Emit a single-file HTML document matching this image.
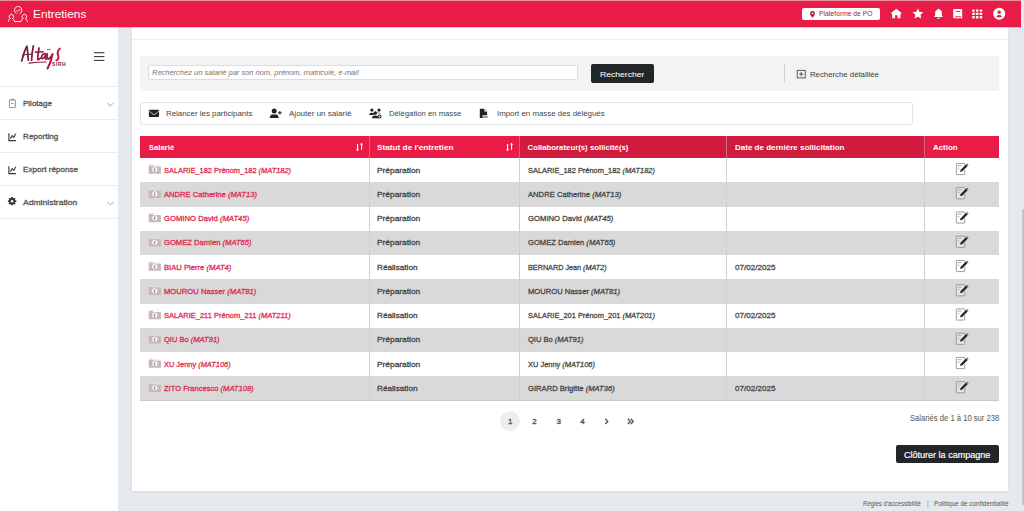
<!DOCTYPE html>
<html><head><meta charset="utf-8"><title>Entretiens</title>
<style>
html,body{margin:0;padding:0;}
body{width:1024px;height:511px;overflow:hidden;position:relative;background:#e6eaee;font-family:"Liberation Sans",sans-serif;}
.b{position:absolute;}
.t{position:absolute;white-space:nowrap;line-height:10px;}
.t i{font-style:italic;}
.ov{position:absolute;left:0;top:0;}
</style></head><body>
<div class="b" style="left:0px;top:0px;width:1021px;height:1px;background:#e8909f;"></div>
<div class="b" style="left:0px;top:1px;width:1021px;height:26px;background:#e91c48;"></div>
<div class="b" style="left:1021px;top:0px;width:3px;height:511px;background:#e6eaee;"></div>
<div class="b" style="left:1022px;top:209px;width:2px;height:295.5px;background:#c4c4c4;"></div>
<div class="b" style="left:0px;top:27px;width:118px;height:484px;background:#fff;"></div>
<div class="b" style="left:0px;top:86px;width:118px;height:1px;background:#ebebeb;"></div>
<div class="b" style="left:0px;top:119px;width:118px;height:1px;background:#ebebeb;"></div>
<div class="b" style="left:0px;top:152px;width:118px;height:1px;background:#ebebeb;"></div>
<div class="b" style="left:0px;top:185px;width:118px;height:1px;background:#ebebeb;"></div>
<div class="b" style="left:0px;top:218px;width:118px;height:1px;background:#ebebeb;"></div>
<div class="b" style="left:132px;top:27px;width:876px;height:464px;background:#fff;box-shadow:0 1px 3px rgba(0,0,0,0.07)"></div>
<div class="b" style="left:132px;top:39px;width:876px;height:1px;background:#efefef;"></div>
<div class="b" style="left:0px;top:27px;width:1021px;height:1px;background:rgba(233,28,72,0.28);"></div>
<div class="b" style="left:140px;top:56px;width:859px;height:35px;background:#f3f3f3;"></div>
<div class="b" style="left:148px;top:65px;width:430px;height:15px;background:#fff;border:1px solid #dcdcdc;border-radius:2px;box-sizing:border-box"></div>
<div class="b" style="left:591px;top:64px;width:62.5px;height:19.200000000000003px;background:#222629;border-radius:2px"></div>
<div class="b" style="left:784px;top:63.6px;width:1px;height:19.1px;background:#cfcfcf;"></div>
<div class="b" style="left:802px;top:8px;width:78.20000000000005px;height:12px;background:#fff;border-radius:2px"></div>
<div class="b" style="left:140px;top:102px;width:773px;height:23px;background:#fff;border:1px solid #e3e3e3;border-radius:3px;box-sizing:border-box"></div>
<div class="b" style="left:140px;top:136px;width:859px;height:22px;background:#e91c48;"></div>
<div class="b" style="left:519px;top:136px;width:405px;height:22px;background:#d01a3e;"></div>
<div class="b" style="left:140px;top:158.0px;width:859px;height:24.25px;background:#fff;"></div>
<div class="b" style="left:140px;top:182.25px;width:859px;height:24.25px;background:#d9d9d9;"></div>
<div class="b" style="left:140px;top:206.5px;width:859px;height:24.25px;background:#fff;"></div>
<div class="b" style="left:140px;top:230.75px;width:859px;height:24.25px;background:#d9d9d9;"></div>
<div class="b" style="left:140px;top:255.0px;width:859px;height:24.25px;background:#fff;"></div>
<div class="b" style="left:140px;top:279.25px;width:859px;height:24.25px;background:#d9d9d9;"></div>
<div class="b" style="left:140px;top:303.5px;width:859px;height:24.25px;background:#fff;"></div>
<div class="b" style="left:140px;top:327.75px;width:859px;height:24.25px;background:#d9d9d9;"></div>
<div class="b" style="left:140px;top:352.0px;width:859px;height:24.25px;background:#fff;"></div>
<div class="b" style="left:140px;top:376.25px;width:859px;height:24.25px;background:#d9d9d9;"></div>
<div class="b" style="left:140px;top:400.0px;width:859px;height:1.0px;background:#c9c9c9;"></div>
<div class="b" style="left:369px;top:136px;width:1px;height:22px;background:#cc6a80;"></div>
<div class="b" style="left:369px;top:158px;width:1px;height:242.5px;background:#cfcfcf;"></div>
<div class="b" style="left:519px;top:136px;width:1px;height:22px;background:#cc6a80;"></div>
<div class="b" style="left:519px;top:158px;width:1px;height:242.5px;background:#cfcfcf;"></div>
<div class="b" style="left:726px;top:136px;width:1px;height:22px;background:#cc6a80;"></div>
<div class="b" style="left:726px;top:158px;width:1px;height:242.5px;background:#cfcfcf;"></div>
<div class="b" style="left:924px;top:136px;width:1px;height:22px;background:#cc6a80;"></div>
<div class="b" style="left:924px;top:158px;width:1px;height:242.5px;background:#cfcfcf;"></div>
<div class="b" style="left:500.2px;top:411.4px;width:20.000000000000057px;height:20.0px;background:#eeeeee;border-radius:50%"></div>
<div class="b" style="left:895.9px;top:444.5px;width:103.10000000000002px;height:18.899999999999977px;background:#222629;border-radius:2px"></div>
<svg class="ov" width="1024" height="511" viewBox="0 0 1024 511"><g fill="none" stroke="#fff" stroke-width="0.9" stroke-linecap="round" stroke-linejoin="round"><path d="M16.3 13.5a3.75 3.75 0 1 1 3.7 0"/><path d="M16.5 10.4l1.2 1.2 2.2-2.3"/><path d="M10.1 18.6a2.3 2.3 0 1 1 2.6 0"/><path d="M8.3 21.6c0.2-1.5 0.9-2.6 1.8-3M12.7 18.6c0.9 0.4 1.6 1.5 1.8 3h6.7c0.2-1.5 0.9-2.6 1.8-3M25.6 18.6c0.9 0.4 1.6 1.5 1.8 3"/><path d="M23 18.6a2.3 2.3 0 1 1 2.6 0"/></g><path fill="#a8173d" d="M812.5 11a2.4 2.4 0 0 0-2.4 2.4c0 1.8 2.4 4 2.4 4s2.4-2.2 2.4-4a2.4 2.4 0 0 0-2.4-2.4zm0 1.5a0.9 0.9 0 1 1 0 1.8a0.9 0.9 0 1 1 0-1.8z"/><path fill="#fff" d="M896.3 8.7l-5.8 4.9h1.6v4.7h3v-3h2.4v3h3v-4.7h1.6z"/><polygon fill="#fff" points="917.90,8.40 919.52,11.78 923.23,12.27 920.52,14.85 921.19,18.53 917.90,16.75 914.61,18.53 915.28,14.85 912.57,12.27 916.28,11.78"/><path fill="#fff" d="M938.5 8.7c-0.5 0-0.8 0.4-0.8 0.9-1.7 0.4-2.6 1.7-2.6 3.6v2.4l-1.1 1.3h9l-1.1-1.3v-2.4c0-1.9-0.9-3.2-2.6-3.6 0-0.5-0.3-0.9-0.8-0.9zm-1.2 9.1a1.2 1.2 0 0 0 2.4 0z"/><path fill="#fff" d="M954 9h7.6a0.6 0.6 0 0 1 0.6 0.6v8.7h-7.8a1.2 1.2 0 0 1-1.2-1.2v-7.1a1 1 0 0 1 0.8-1z"/><rect x="955.2" y="16.3" width="6" height="0.9" fill="#e91c48"/><rect x="956" y="11" width="4" height="0.9" fill="#e91c48"/><rect fill="#fff" x="972.20" y="9.40" width="2.5" height="2.3" rx="0.4"/><rect fill="#fff" x="972.20" y="12.75" width="2.5" height="2.3" rx="0.4"/><rect fill="#fff" x="972.20" y="16.10" width="2.5" height="2.3" rx="0.4"/><rect fill="#fff" x="975.95" y="9.40" width="2.5" height="2.3" rx="0.4"/><rect fill="#fff" x="975.95" y="12.75" width="2.5" height="2.3" rx="0.4"/><rect fill="#fff" x="975.95" y="16.10" width="2.5" height="2.3" rx="0.4"/><rect fill="#fff" x="979.70" y="9.40" width="2.5" height="2.3" rx="0.4"/><rect fill="#fff" x="979.70" y="12.75" width="2.5" height="2.3" rx="0.4"/><rect fill="#fff" x="979.70" y="16.10" width="2.5" height="2.3" rx="0.4"/><circle cx="999.2" cy="13.65" r="6" fill="#fff"/><circle cx="999.2" cy="12.2" r="1.7" fill="#e91c48"/><path fill="#e91c48" d="M996.3 16.6c0.5-1 1.6-1.5 2.9-1.5s2.4 0.5 2.9 1.5c-0.7 0.7-1.7 1-2.9 1s-2.2-0.3-2.9-1z"/><rect x="94" y="52.150000000000006" width="10.4" height="1.1" fill="#3a3a3a"/><rect x="94" y="56.050000000000004" width="10.4" height="1.1" fill="#3a3a3a"/><rect x="94" y="59.85" width="10.4" height="1.1" fill="#3a3a3a"/><g fill="none" stroke="#777" stroke-width="0.8"><rect x="9.4" y="100" width="6" height="7.6" rx="0.6"/><path d="M11 100v-0.6h2.8v0.6"/><path d="M11.2 103.5h2.4"/></g><g fill="none" stroke="#333" stroke-width="1.1"><path d="M8.9 133.2v7.4h7"/><path d="M10.3 138.79999999999998l1.9-3.2 1.6 1.8 2-3.6"/></g><g fill="none" stroke="#333" stroke-width="1.1"><path d="M8.9 166.2v7.4h7"/><path d="M10.3 171.79999999999998l1.9-3.2 1.6 1.8 2-3.6"/></g><g fill="#333"><circle cx="12.1" cy="201.2" r="3.1"/></g><rect x="11.25" y="197.0" width="1.7" height="2" fill="#333" transform="rotate(0 12.1 201.2)"/><rect x="11.25" y="197.0" width="1.7" height="2" fill="#333" transform="rotate(45 12.1 201.2)"/><rect x="11.25" y="197.0" width="1.7" height="2" fill="#333" transform="rotate(90 12.1 201.2)"/><rect x="11.25" y="197.0" width="1.7" height="2" fill="#333" transform="rotate(135 12.1 201.2)"/><rect x="11.25" y="197.0" width="1.7" height="2" fill="#333" transform="rotate(180 12.1 201.2)"/><rect x="11.25" y="197.0" width="1.7" height="2" fill="#333" transform="rotate(225 12.1 201.2)"/><rect x="11.25" y="197.0" width="1.7" height="2" fill="#333" transform="rotate(270 12.1 201.2)"/><rect x="11.25" y="197.0" width="1.7" height="2" fill="#333" transform="rotate(315 12.1 201.2)"/><circle cx="12.1" cy="201.2" r="1.2" fill="#fff"/><path d="M107.2 102.9l3.2 3 3.2-3" fill="none" stroke="#888" stroke-width="0.8"/><path d="M107.2 201.9l3.2 3 3.2-3" fill="none" stroke="#888" stroke-width="0.8"/><g fill="none" stroke="#333" stroke-width="0.8"><rect x="797.2" y="70.3" width="8" height="7.6"/><path d="M799 74.1h4.4M801.2 71.9v4.4"/></g><rect x="148.9" y="109.8" width="10.1" height="7.2" rx="0.7" fill="#222"/><path d="M149.3 111.2l4.75 3.7 4.75-3.7" fill="none" stroke="#fff" stroke-width="0.7"/><g fill="#222"><circle cx="274.2" cy="110.9" r="2.5"/><path d="M269.8 118c0-2.2 1-3.5 2.4-3.5h4c1.4 0 2.4 1.3 2.4 3.5z"/><path d="M279.3 111.1h1.1v1.2h1.2v1.1h-1.2v1.2h-1.1v-1.2h-1.2v-1.1h1.2z"/></g><g fill="#222"><circle cx="371.9" cy="110.1" r="1.6"/><circle cx="379" cy="110.1" r="1.6"/><circle cx="375.3" cy="112.9" r="1.75"/><path d="M369.1 114.9Q369.3 112.8 371.9 112.8Q374.5 112.8 374.7 114.9Z"/><path d="M371.9 118.3Q372.1 115.6 375.3 115.6Q378.5 115.6 378.7 118.3Z"/></g><circle cx="379.5" cy="116.5" r="1.5" fill="#fff" stroke="#222" stroke-width="1.1"/><path d="M376.6 112.9h2.2c0.8 0 1.4 0.3 1.7 0.9" fill="none" stroke="#444" stroke-width="0.7"/><path fill="#222" d="M479.8 108.8h4.4l2.9 2.9v3.5h-4.6v2.9h-2.7z"/><path d="M484.2 108.8v2.9h2.9z" fill="#fff" opacity="0.7"/><text x="482.3" y="118.1" font-size="3.4" font-weight="700" font-family="Liberation Sans" fill="#333" letter-spacing="-0.1">csv</text><g fill="#fff"><rect x="357" y="144" width="1.1" height="5.6"/><path d="M355.9 149.2h3.3l-1.65 2z"/><rect x="361" y="144.6" width="1.1" height="5.2"/><path d="M359.9 144.8h3.3l-1.65-2z"/></g><g fill="#fff"><rect x="507" y="144" width="1.1" height="5.6"/><path d="M505.9 149.2h3.3l-1.65 2z"/><rect x="511" y="144.6" width="1.1" height="5.2"/><path d="M509.9 144.8h3.3l-1.65-2z"/></g><g><path fill="#bdbdbd" d="M148.7 165.6h4l0.8 0.8h7.4v7.3h-12.2z"/><path fill="#e6e6e6" d="M149.5 164.2h3.3l0.6 0.7h6.6v0.6h-10.5z"/><circle cx="154.8" cy="169.6" r="2.6" fill="#fff"/><path d="M155.4 167.6l-1.6 2.3h1.4l-1 2.1" fill="none" stroke="#d2375a" stroke-width="0.7"/></g><g><rect x="956.3" y="163.4" width="8.4" height="11.2" rx="0.6" fill="rgba(255,255,255,0.35)" stroke="#8c8c8c" stroke-width="0.85"/><path d="M957.8 165.7h3.6M957.8 168.2h1.6" stroke="#999" stroke-width="0.85"/><path d="M959.3 172.6l0.5-2.6 6.2-6.2 2.3 2.3-6.2 6.2z" fill="#fff"/><path d="M960.1 171.8l0.4-1.9 5.6-5.6 1.6 1.6-5.6 5.6z" fill="#252525"/><path d="M966.4 164.0l0.6-0.6 1.6 1.6-0.6 0.6z" fill="#3a3f46"/></g><g><path fill="#bdbdbd" d="M148.7 189.85h4l0.8 0.8h7.4v7.3h-12.2z"/><path fill="#e6e6e6" d="M149.5 188.45h3.3l0.6 0.7h6.6v0.6h-10.5z"/><circle cx="154.8" cy="193.85" r="2.6" fill="#fff"/><path d="M155.4 191.85l-1.6 2.3h1.4l-1 2.1" fill="none" stroke="#d2375a" stroke-width="0.7"/></g><g><rect x="956.3" y="187.65" width="8.4" height="11.2" rx="0.6" fill="rgba(255,255,255,0.35)" stroke="#8c8c8c" stroke-width="0.85"/><path d="M957.8 189.95h3.6M957.8 192.45h1.6" stroke="#999" stroke-width="0.85"/><path d="M959.3 196.85l0.5-2.6 6.2-6.2 2.3 2.3-6.2 6.2z" fill="#d9d9d9"/><path d="M960.1 196.05l0.4-1.9 5.6-5.6 1.6 1.6-5.6 5.6z" fill="#252525"/><path d="M966.4 188.25l0.6-0.6 1.6 1.6-0.6 0.6z" fill="#3a3f46"/></g><g><path fill="#bdbdbd" d="M148.7 214.1h4l0.8 0.8h7.4v7.3h-12.2z"/><path fill="#e6e6e6" d="M149.5 212.7h3.3l0.6 0.7h6.6v0.6h-10.5z"/><circle cx="154.8" cy="218.1" r="2.6" fill="#fff"/><path d="M155.4 216.1l-1.6 2.3h1.4l-1 2.1" fill="none" stroke="#d2375a" stroke-width="0.7"/></g><g><rect x="956.3" y="211.9" width="8.4" height="11.2" rx="0.6" fill="rgba(255,255,255,0.35)" stroke="#8c8c8c" stroke-width="0.85"/><path d="M957.8 214.2h3.6M957.8 216.7h1.6" stroke="#999" stroke-width="0.85"/><path d="M959.3 221.1l0.5-2.6 6.2-6.2 2.3 2.3-6.2 6.2z" fill="#fff"/><path d="M960.1 220.3l0.4-1.9 5.6-5.6 1.6 1.6-5.6 5.6z" fill="#252525"/><path d="M966.4 212.5l0.6-0.6 1.6 1.6-0.6 0.6z" fill="#3a3f46"/></g><g><path fill="#bdbdbd" d="M148.7 238.35h4l0.8 0.8h7.4v7.3h-12.2z"/><path fill="#e6e6e6" d="M149.5 236.95h3.3l0.6 0.7h6.6v0.6h-10.5z"/><circle cx="154.8" cy="242.35" r="2.6" fill="#fff"/><path d="M155.4 240.35l-1.6 2.3h1.4l-1 2.1" fill="none" stroke="#d2375a" stroke-width="0.7"/></g><g><rect x="956.3" y="236.15" width="8.4" height="11.2" rx="0.6" fill="rgba(255,255,255,0.35)" stroke="#8c8c8c" stroke-width="0.85"/><path d="M957.8 238.45h3.6M957.8 240.95h1.6" stroke="#999" stroke-width="0.85"/><path d="M959.3 245.35l0.5-2.6 6.2-6.2 2.3 2.3-6.2 6.2z" fill="#d9d9d9"/><path d="M960.1 244.55l0.4-1.9 5.6-5.6 1.6 1.6-5.6 5.6z" fill="#252525"/><path d="M966.4 236.75l0.6-0.6 1.6 1.6-0.6 0.6z" fill="#3a3f46"/></g><g><path fill="#bdbdbd" d="M148.7 262.6h4l0.8 0.8h7.4v7.3h-12.2z"/><path fill="#e6e6e6" d="M149.5 261.2h3.3l0.6 0.7h6.6v0.6h-10.5z"/><circle cx="154.8" cy="266.6" r="2.6" fill="#fff"/><path d="M155.4 264.6l-1.6 2.3h1.4l-1 2.1" fill="none" stroke="#d2375a" stroke-width="0.7"/></g><g><rect x="956.3" y="260.4" width="8.4" height="11.2" rx="0.6" fill="rgba(255,255,255,0.35)" stroke="#8c8c8c" stroke-width="0.85"/><path d="M957.8 262.7h3.6M957.8 265.2h1.6" stroke="#999" stroke-width="0.85"/><path d="M959.3 269.6l0.5-2.6 6.2-6.2 2.3 2.3-6.2 6.2z" fill="#fff"/><path d="M960.1 268.8l0.4-1.9 5.6-5.6 1.6 1.6-5.6 5.6z" fill="#252525"/><path d="M966.4 261.0l0.6-0.6 1.6 1.6-0.6 0.6z" fill="#3a3f46"/></g><g><path fill="#bdbdbd" d="M148.7 286.85h4l0.8 0.8h7.4v7.3h-12.2z"/><path fill="#e6e6e6" d="M149.5 285.45h3.3l0.6 0.7h6.6v0.6h-10.5z"/><circle cx="154.8" cy="290.85" r="2.6" fill="#fff"/><path d="M155.4 288.85l-1.6 2.3h1.4l-1 2.1" fill="none" stroke="#d2375a" stroke-width="0.7"/></g><g><rect x="956.3" y="284.65" width="8.4" height="11.2" rx="0.6" fill="rgba(255,255,255,0.35)" stroke="#8c8c8c" stroke-width="0.85"/><path d="M957.8 286.95h3.6M957.8 289.45h1.6" stroke="#999" stroke-width="0.85"/><path d="M959.3 293.85l0.5-2.6 6.2-6.2 2.3 2.3-6.2 6.2z" fill="#d9d9d9"/><path d="M960.1 293.05l0.4-1.9 5.6-5.6 1.6 1.6-5.6 5.6z" fill="#252525"/><path d="M966.4 285.25l0.6-0.6 1.6 1.6-0.6 0.6z" fill="#3a3f46"/></g><g><path fill="#bdbdbd" d="M148.7 311.1h4l0.8 0.8h7.4v7.3h-12.2z"/><path fill="#e6e6e6" d="M149.5 309.7h3.3l0.6 0.7h6.6v0.6h-10.5z"/><circle cx="154.8" cy="315.1" r="2.6" fill="#fff"/><path d="M155.4 313.1l-1.6 2.3h1.4l-1 2.1" fill="none" stroke="#d2375a" stroke-width="0.7"/></g><g><rect x="956.3" y="308.9" width="8.4" height="11.2" rx="0.6" fill="rgba(255,255,255,0.35)" stroke="#8c8c8c" stroke-width="0.85"/><path d="M957.8 311.2h3.6M957.8 313.7h1.6" stroke="#999" stroke-width="0.85"/><path d="M959.3 318.1l0.5-2.6 6.2-6.2 2.3 2.3-6.2 6.2z" fill="#fff"/><path d="M960.1 317.3l0.4-1.9 5.6-5.6 1.6 1.6-5.6 5.6z" fill="#252525"/><path d="M966.4 309.5l0.6-0.6 1.6 1.6-0.6 0.6z" fill="#3a3f46"/></g><g><path fill="#bdbdbd" d="M148.7 335.35h4l0.8 0.8h7.4v7.3h-12.2z"/><path fill="#e6e6e6" d="M149.5 333.95h3.3l0.6 0.7h6.6v0.6h-10.5z"/><circle cx="154.8" cy="339.35" r="2.6" fill="#fff"/><path d="M155.4 337.35l-1.6 2.3h1.4l-1 2.1" fill="none" stroke="#d2375a" stroke-width="0.7"/></g><g><rect x="956.3" y="333.15" width="8.4" height="11.2" rx="0.6" fill="rgba(255,255,255,0.35)" stroke="#8c8c8c" stroke-width="0.85"/><path d="M957.8 335.45h3.6M957.8 337.95h1.6" stroke="#999" stroke-width="0.85"/><path d="M959.3 342.35l0.5-2.6 6.2-6.2 2.3 2.3-6.2 6.2z" fill="#d9d9d9"/><path d="M960.1 341.55l0.4-1.9 5.6-5.6 1.6 1.6-5.6 5.6z" fill="#252525"/><path d="M966.4 333.75l0.6-0.6 1.6 1.6-0.6 0.6z" fill="#3a3f46"/></g><g><path fill="#bdbdbd" d="M148.7 359.6h4l0.8 0.8h7.4v7.3h-12.2z"/><path fill="#e6e6e6" d="M149.5 358.2h3.3l0.6 0.7h6.6v0.6h-10.5z"/><circle cx="154.8" cy="363.6" r="2.6" fill="#fff"/><path d="M155.4 361.6l-1.6 2.3h1.4l-1 2.1" fill="none" stroke="#d2375a" stroke-width="0.7"/></g><g><rect x="956.3" y="357.4" width="8.4" height="11.2" rx="0.6" fill="rgba(255,255,255,0.35)" stroke="#8c8c8c" stroke-width="0.85"/><path d="M957.8 359.7h3.6M957.8 362.2h1.6" stroke="#999" stroke-width="0.85"/><path d="M959.3 366.6l0.5-2.6 6.2-6.2 2.3 2.3-6.2 6.2z" fill="#fff"/><path d="M960.1 365.8l0.4-1.9 5.6-5.6 1.6 1.6-5.6 5.6z" fill="#252525"/><path d="M966.4 358.0l0.6-0.6 1.6 1.6-0.6 0.6z" fill="#3a3f46"/></g><g><path fill="#bdbdbd" d="M148.7 383.85h4l0.8 0.8h7.4v7.3h-12.2z"/><path fill="#e6e6e6" d="M149.5 382.45h3.3l0.6 0.7h6.6v0.6h-10.5z"/><circle cx="154.8" cy="387.85" r="2.6" fill="#fff"/><path d="M155.4 385.85l-1.6 2.3h1.4l-1 2.1" fill="none" stroke="#d2375a" stroke-width="0.7"/></g><g><rect x="956.3" y="381.65" width="8.4" height="11.2" rx="0.6" fill="rgba(255,255,255,0.35)" stroke="#8c8c8c" stroke-width="0.85"/><path d="M957.8 383.95h3.6M957.8 386.45h1.6" stroke="#999" stroke-width="0.85"/><path d="M959.3 390.85l0.5-2.6 6.2-6.2 2.3 2.3-6.2 6.2z" fill="#d9d9d9"/><path d="M960.1 390.05l0.4-1.9 5.6-5.6 1.6 1.6-5.6 5.6z" fill="#252525"/><path d="M966.4 382.25l0.6-0.6 1.6 1.6-0.6 0.6z" fill="#3a3f46"/></g><path d="M605.3 418.8l2.4 2.6-2.4 2.6" fill="none" stroke="#555" stroke-width="1.4"/><path d="M627.8 418.8l2.4 2.6-2.4 2.6M630.8 418.8l2.4 2.6-2.4 2.6" fill="none" stroke="#555" stroke-width="1.4"/><defs><linearGradient id="lg" gradientUnits="userSpaceOnUse" x1="22" y1="0" x2="60" y2="0"><stop offset="0" stop-color="#6e2040"/><stop offset="0.5" stop-color="#8e1c40"/><stop offset="1" stop-color="#c8173f"/></linearGradient></defs><g fill="none" stroke="url(#lg)" stroke-linecap="round" stroke-linejoin="round" stroke-width="1.75"><path d="M21.7 61C23 56 24.6 50 26.9 46.2C27.6 50 27.9 55 28.3 60.2"/><path d="M22.8 55.2C25.5 54.4 28.5 54.2 31.4 54.1" stroke-width="1.38"/><path d="M33.4 45.8C32.5 50 31.8 55 31.6 60.2"/><path d="M39 48C38.4 51.5 37.8 55.5 37.7 59.6C38.6 59.9 39.6 59.3 40.3 58.3"/><path d="M35.3 52.2L43.1 51.7" stroke-width="1.38"/><path d="M45.8 54.1C43.9 52.8 41.6 54.6 41.5 57.1C41.4 59.2 43.4 59 44.5 57.1L45.8 54.1C45.3 56.4 45.2 58.4 46.1 59.4"/><path d="M47.2 54C46.9 56.5 47 58.8 48.4 58.9C49.8 59 51.3 56.5 52.6 54C51.8 59 49.7 64.5 47.5 68.4" stroke-width="2.00"/><path d="M59.8 48.6C57.8 50.5 57.2 53 58.1 55.4C58.9 57.6 58.4 59.6 56.4 60.4" stroke-width="2.00"/><path d="M29.1 63.1C34.8 62.5 40.5 62.1 46 62" stroke-width="1.25"/></g><circle cx="47.9" cy="49.5" r="0.65" fill="#8a1d3d"/><circle cx="49.8" cy="49.5" r="0.65" fill="#8a1d3d"/><text x="52.1" y="65.9" font-size="5" font-weight="700" font-family="Liberation Sans" fill="#7a2a45" letter-spacing="0.55">SIRH</text></svg>
<span class="t" style="left:32.90px;top:8.60px;font-size:11.0px;font-weight:400;color:#fff;letter-spacing:0.000px;transform:scaleX(1.0762);transform-origin:0 0">Entretiens</span>
<span class="t" style="left:819.00px;top:9.10px;font-size:6.3px;font-weight:400;color:#a8173d;letter-spacing:0.000px;transform:scaleX(1.0670);transform-origin:0 0">Plateforme de PO</span>
<span class="t" style="left:23.00px;top:99.00px;font-size:8.0px;font-weight:400;color:#555;letter-spacing:0.000px;-webkit-text-stroke:0.3px #555">Pilotage</span>
<span class="t" style="left:23.00px;top:131.80px;font-size:8.0px;font-weight:400;color:#555;letter-spacing:0.000px;transform:scaleX(1.0177);transform-origin:0 0;-webkit-text-stroke:0.3px #555">Reporting</span>
<span class="t" style="left:23.00px;top:164.80px;font-size:8.0px;font-weight:400;color:#555;letter-spacing:0.000px;transform:scaleX(1.0138);transform-origin:0 0;-webkit-text-stroke:0.3px #555">Export réponse</span>
<span class="t" style="left:23.00px;top:197.70px;font-size:8.0px;font-weight:400;color:#555;letter-spacing:0.000px;transform:scaleX(1.0693);transform-origin:0 0;-webkit-text-stroke:0.3px #555">Administration</span>
<span class="t" style="left:152.00px;top:68.30px;font-size:7.9px;font-weight:400;color:#757575;letter-spacing:0.000px;transform:scaleX(0.9479);transform-origin:0 0;font-style:italic"><i>Recherchez un salarié par son nom, prénom, matricule, e-mail</i></span>
<span class="t" style="left:600.00px;top:69.70px;font-size:8.1px;font-weight:400;color:#fff;letter-spacing:0.000px;transform:scaleX(1.0613);transform-origin:0 0;-webkit-text-stroke:0.05px #fff">Rechercher</span>
<span class="t" style="left:810.20px;top:69.50px;font-size:8.1px;font-weight:400;color:#444;letter-spacing:0.000px;transform:scaleX(0.9617);transform-origin:0 0;-webkit-text-stroke:0.05px #444">Recherche détaillée</span>
<span class="t" style="left:166.00px;top:109.10px;font-size:8.1px;font-weight:400;color:#444;letter-spacing:0.000px;transform:scaleX(0.9749);transform-origin:0 0">Relancer les participants</span>
<span class="t" style="left:289.00px;top:109.10px;font-size:8.1px;font-weight:400;color:#444;letter-spacing:0.000px;transform:scaleX(0.9907);transform-origin:0 0">Ajouter un salarié</span>
<span class="t" style="left:388.90px;top:109.10px;font-size:8.1px;font-weight:400;color:#444;letter-spacing:0.000px;transform:scaleX(0.9509);transform-origin:0 0">Délégation en masse</span>
<span class="t" style="left:496.50px;top:109.10px;font-size:8.1px;font-weight:400;color:#444;letter-spacing:0.000px;transform:scaleX(0.9722);transform-origin:0 0">Import en masse des délégués</span>
<span class="t" style="left:148.70px;top:142.70px;font-size:7.8px;font-weight:700;color:#fff;letter-spacing:0.000px">Salarié</span>
<span class="t" style="left:377.10px;top:142.70px;font-size:7.8px;font-weight:700;color:#fff;letter-spacing:0.000px;transform:scaleX(1.0556);transform-origin:0 0">Statut de l'entretien</span>
<span class="t" style="left:527.50px;top:142.70px;font-size:7.8px;font-weight:700;color:#fff;letter-spacing:0.000px">Collaborateur(s) sollicité(s)</span>
<span class="t" style="left:734.80px;top:142.70px;font-size:7.8px;font-weight:700;color:#fff;letter-spacing:0.000px;transform:scaleX(1.0273);transform-origin:0 0">Date de dernière sollicitation</span>
<span class="t" style="left:933.00px;top:142.70px;font-size:7.8px;font-weight:700;color:#fff;letter-spacing:0.000px;transform:scaleX(1.0142);transform-origin:0 0">Action</span>
<span class="t" style="left:163.80px;top:165.50px;font-size:8.0px;font-weight:400;color:#e0264f;letter-spacing:0.000px;transform:scaleX(0.9290);transform-origin:0 0;-webkit-text-stroke:0.28px #e0264f">SALARIE_182 Prénom_182 <i>(MAT182)</i></span>
<span class="t" style="left:377.30px;top:165.50px;font-size:8.0px;font-weight:400;color:#444;letter-spacing:0.000px;transform:scaleX(1.0445);transform-origin:0 0;-webkit-text-stroke:0.28px #444">Préparation</span>
<span class="t" style="left:527.50px;top:165.50px;font-size:8.0px;font-weight:400;color:#444;letter-spacing:0.000px;transform:scaleX(0.9275);transform-origin:0 0;-webkit-text-stroke:0.28px #444">SALARIE_182 Prénom_182 <i>(MAT182)</i></span>
<span class="t" style="left:163.80px;top:189.75px;font-size:8.0px;font-weight:400;color:#e0264f;letter-spacing:0.000px;transform:scaleX(0.9523);transform-origin:0 0;-webkit-text-stroke:0.28px #e0264f">ANDRE Catherine <i>(MAT13)</i></span>
<span class="t" style="left:377.30px;top:189.75px;font-size:8.0px;font-weight:400;color:#444;letter-spacing:0.000px;transform:scaleX(1.0445);transform-origin:0 0;-webkit-text-stroke:0.28px #444">Préparation</span>
<span class="t" style="left:527.50px;top:189.75px;font-size:8.0px;font-weight:400;color:#444;letter-spacing:0.000px;transform:scaleX(0.9554);transform-origin:0 0;-webkit-text-stroke:0.28px #444">ANDRE Catherine <i>(MAT13)</i></span>
<span class="t" style="left:163.80px;top:214.00px;font-size:8.0px;font-weight:400;color:#e0264f;letter-spacing:0.000px;transform:scaleX(0.9600);transform-origin:0 0;-webkit-text-stroke:0.28px #e0264f">GOMINO David <i>(MAT45)</i></span>
<span class="t" style="left:377.30px;top:214.00px;font-size:8.0px;font-weight:400;color:#444;letter-spacing:0.000px;transform:scaleX(1.0445);transform-origin:0 0;-webkit-text-stroke:0.28px #444">Préparation</span>
<span class="t" style="left:527.50px;top:214.00px;font-size:8.0px;font-weight:400;color:#444;letter-spacing:0.000px;transform:scaleX(0.9623);transform-origin:0 0;-webkit-text-stroke:0.28px #444">GOMINO David <i>(MAT45)</i></span>
<span class="t" style="left:163.80px;top:238.25px;font-size:8.0px;font-weight:400;color:#e0264f;letter-spacing:0.000px;transform:scaleX(0.9536);transform-origin:0 0;-webkit-text-stroke:0.28px #e0264f">GOMEZ Damien <i>(MAT65)</i></span>
<span class="t" style="left:377.30px;top:238.25px;font-size:8.0px;font-weight:400;color:#444;letter-spacing:0.000px;transform:scaleX(1.0445);transform-origin:0 0;-webkit-text-stroke:0.28px #444">Préparation</span>
<span class="t" style="left:527.50px;top:238.25px;font-size:8.0px;font-weight:400;color:#444;letter-spacing:0.000px;transform:scaleX(0.9514);transform-origin:0 0;-webkit-text-stroke:0.28px #444">GOMEZ Damien <i>(MAT65)</i></span>
<span class="t" style="left:163.80px;top:262.50px;font-size:8.0px;font-weight:400;color:#e0264f;letter-spacing:0.000px;transform:scaleX(0.9557);transform-origin:0 0;-webkit-text-stroke:0.28px #e0264f">BIAU Pierre <i>(MAT4)</i></span>
<span class="t" style="left:377.30px;top:262.50px;font-size:8.0px;font-weight:400;color:#444;letter-spacing:0.000px;transform:scaleX(1.0233);transform-origin:0 0;-webkit-text-stroke:0.28px #444">Réalisation</span>
<span class="t" style="left:527.50px;top:262.50px;font-size:8.0px;font-weight:400;color:#444;letter-spacing:0.000px;transform:scaleX(0.9048);transform-origin:0 0;-webkit-text-stroke:0.28px #444">BERNARD Jean <i>(MAT2)</i></span>
<span class="t" style="left:734.80px;top:262.50px;font-size:8.0px;font-weight:400;color:#444;letter-spacing:0.000px;transform:scaleX(1.0090);transform-origin:0 0;-webkit-text-stroke:0.28px #444">07/02/2025</span>
<span class="t" style="left:163.80px;top:286.75px;font-size:8.0px;font-weight:400;color:#e0264f;letter-spacing:0.000px;transform:scaleX(0.9551);transform-origin:0 0;-webkit-text-stroke:0.28px #e0264f">MOUROU Nasser <i>(MAT81)</i></span>
<span class="t" style="left:377.30px;top:286.75px;font-size:8.0px;font-weight:400;color:#444;letter-spacing:0.000px;transform:scaleX(1.0445);transform-origin:0 0;-webkit-text-stroke:0.28px #444">Préparation</span>
<span class="t" style="left:527.50px;top:286.75px;font-size:8.0px;font-weight:400;color:#444;letter-spacing:0.000px;transform:scaleX(0.9520);transform-origin:0 0;-webkit-text-stroke:0.28px #444">MOUROU Nasser <i>(MAT81)</i></span>
<span class="t" style="left:163.80px;top:311.00px;font-size:8.0px;font-weight:400;color:#e0264f;letter-spacing:0.000px;transform:scaleX(0.9390);transform-origin:0 0;-webkit-text-stroke:0.28px #e0264f">SALARIE_211 Prénom_211 <i>(MAT211)</i></span>
<span class="t" style="left:377.30px;top:311.00px;font-size:8.0px;font-weight:400;color:#444;letter-spacing:0.000px;transform:scaleX(1.0233);transform-origin:0 0;-webkit-text-stroke:0.28px #444">Réalisation</span>
<span class="t" style="left:527.50px;top:311.00px;font-size:8.0px;font-weight:400;color:#444;letter-spacing:0.000px;transform:scaleX(0.9275);transform-origin:0 0;-webkit-text-stroke:0.28px #444">SALARIE_201 Prénom_201 <i>(MAT201)</i></span>
<span class="t" style="left:734.80px;top:311.00px;font-size:8.0px;font-weight:400;color:#444;letter-spacing:0.000px;transform:scaleX(1.0090);transform-origin:0 0;-webkit-text-stroke:0.28px #444">07/02/2025</span>
<span class="t" style="left:163.80px;top:335.25px;font-size:8.0px;font-weight:400;color:#e0264f;letter-spacing:0.000px;transform:scaleX(0.9428);transform-origin:0 0;-webkit-text-stroke:0.28px #e0264f">QIU Bo <i>(MAT91)</i></span>
<span class="t" style="left:377.30px;top:335.25px;font-size:8.0px;font-weight:400;color:#444;letter-spacing:0.000px;transform:scaleX(1.0445);transform-origin:0 0;-webkit-text-stroke:0.28px #444">Préparation</span>
<span class="t" style="left:527.50px;top:335.25px;font-size:8.0px;font-weight:400;color:#444;letter-spacing:0.000px;transform:scaleX(0.9411);transform-origin:0 0;-webkit-text-stroke:0.28px #444">QIU Bo <i>(MAT91)</i></span>
<span class="t" style="left:163.80px;top:359.50px;font-size:8.0px;font-weight:400;color:#e0264f;letter-spacing:0.000px;transform:scaleX(0.9266);transform-origin:0 0;-webkit-text-stroke:0.28px #e0264f">XU Jenny <i>(MAT106)</i></span>
<span class="t" style="left:377.30px;top:359.50px;font-size:8.0px;font-weight:400;color:#444;letter-spacing:0.000px;transform:scaleX(1.0445);transform-origin:0 0;-webkit-text-stroke:0.28px #444">Préparation</span>
<span class="t" style="left:527.50px;top:359.50px;font-size:8.0px;font-weight:400;color:#444;letter-spacing:0.000px;transform:scaleX(0.9308);transform-origin:0 0;-webkit-text-stroke:0.28px #444">XU Jenny <i>(MAT106)</i></span>
<span class="t" style="left:163.80px;top:383.75px;font-size:8.0px;font-weight:400;color:#e0264f;letter-spacing:0.000px;transform:scaleX(0.9448);transform-origin:0 0;-webkit-text-stroke:0.28px #e0264f">ZITO Francesco <i>(MAT108)</i></span>
<span class="t" style="left:377.30px;top:383.75px;font-size:8.0px;font-weight:400;color:#444;letter-spacing:0.000px;transform:scaleX(1.0233);transform-origin:0 0;-webkit-text-stroke:0.28px #444">Réalisation</span>
<span class="t" style="left:527.50px;top:383.75px;font-size:8.0px;font-weight:400;color:#444;letter-spacing:0.000px;transform:scaleX(0.9530);transform-origin:0 0;-webkit-text-stroke:0.28px #444">GIRARD Brigitte <i>(MAT36)</i></span>
<span class="t" style="left:734.80px;top:383.75px;font-size:8.0px;font-weight:400;color:#444;letter-spacing:0.000px;transform:scaleX(1.0090);transform-origin:0 0;-webkit-text-stroke:0.28px #444">07/02/2025</span>
<span class="t" style="left:508.00px;top:417.20px;font-size:8.0px;font-weight:400;color:#555;letter-spacing:0.000px;-webkit-text-stroke:0.35px #555">1</span>
<span class="t" style="left:532.30px;top:417.20px;font-size:8.0px;font-weight:400;color:#555;letter-spacing:0.000px;-webkit-text-stroke:0.35px #555">2</span>
<span class="t" style="left:556.55px;top:417.20px;font-size:8.0px;font-weight:400;color:#555;letter-spacing:0.000px;-webkit-text-stroke:0.35px #555">3</span>
<span class="t" style="left:580.30px;top:417.20px;font-size:8.0px;font-weight:400;color:#555;letter-spacing:0.000px;-webkit-text-stroke:0.35px #555">4</span>
<span class="t" style="left:910.00px;top:412.60px;font-size:8.3px;font-weight:400;color:#555;letter-spacing:0.000px;transform:scaleX(0.9219);transform-origin:0 0">Salariés de 1 à 10 sur 238</span>
<span class="t" style="left:904.30px;top:449.60px;font-size:8.5px;font-weight:400;color:#fff;letter-spacing:0.000px;transform:scaleX(1.0620);transform-origin:0 0;-webkit-text-stroke:0.18px #fff">Clôturer la campagne</span>
<span class="t" style="left:862.50px;top:498.50px;font-size:7.2px;font-weight:400;color:#555;letter-spacing:0.000px;transform:scaleX(0.8439);transform-origin:0 0">Règles d'accessibilité</span>
<span class="t" style="left:927.00px;top:499.00px;font-size:6.6px;font-weight:400;color:#888;letter-spacing:0.000px">|</span>
<span class="t" style="left:933.80px;top:498.50px;font-size:7.2px;font-weight:400;color:#555;letter-spacing:0.000px;transform:scaleX(0.8921);transform-origin:0 0">Politique de confidentialité</span>
</body></html>
